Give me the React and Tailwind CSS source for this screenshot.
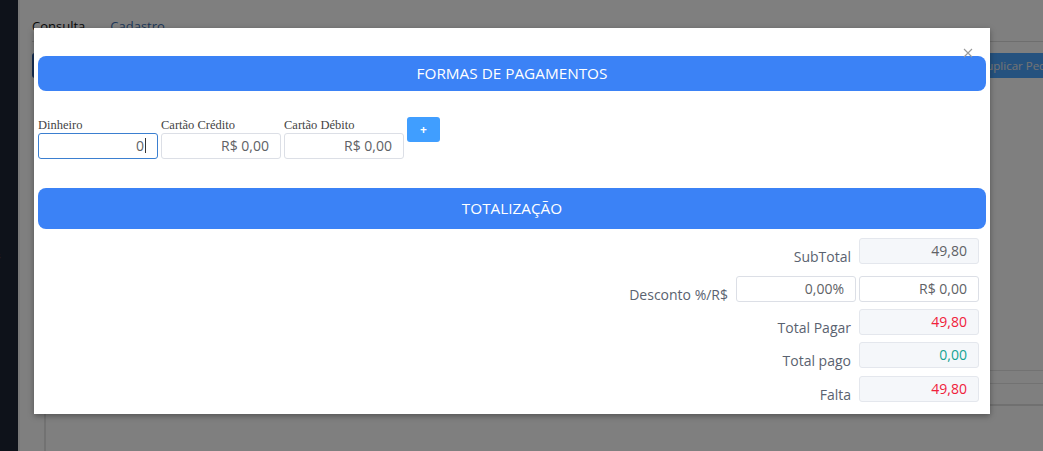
const sans = { fontFamily: '"Open Sans", "Noto Sans", sans-serif' };

function MoneyInput({ value, focused, className = "" }) {
  return (
    <div
      className={`h-[26px] w-[120px] rounded-[3px] border bg-white px-[11px] text-right text-[14px] leading-[24px] text-[#606266] ${
        focused ? "border-[#3b7fd0]" : "border-[#dcdfe6]"
      } ${className}`}
    >
      {value}
      {focused && <span className="ml-[1px] inline-block h-[15px] w-px translate-y-[2px] bg-[#333]" />}
    </div>
  );
}

function ReadInput({ value, color = "text-[#606266]" }) {
  return (
    <div
      className={`h-[26px] w-[120px] rounded-[3px] border border-[#e4e7ed] bg-[#f5f7fa] px-[11px] text-right text-[14px] leading-[24px] ${color}`}
    >
      {value}
    </div>
  );
}

function TotalRow({ label, children, className = "" }) {
  return (
    <div className={`flex items-end justify-end ${className}`}>
      <span className="mr-[8px] translate-y-[3px] text-[14px] leading-5 text-[#5a6270]">{label}</span>
      {children}
    </div>
  );
}

function Header({ children, className = "" }) {
  return (
    <div
      className={`flex items-center justify-center rounded-[8px] bg-[#3b82f6] text-[15.3px] text-white ${className}`}
    >
      {children}
    </div>
  );
}

export default function App() {
  return (
    <div className="relative flex h-[451px] w-[1043px] overflow-hidden bg-white" style={sans}>
      {/* page behind the dialog */}
      <div className="relative w-[18px] bg-[#1c2534]">
        <span className="absolute left-[-4px] top-[249px] text-[9px] text-[#cbd5e1]">s</span>
      </div>
      <div className="w-[2px] bg-[#f0f0f0]" />
      <div className="flex flex-1 flex-col bg-white pl-[12px]">
        <div className="flex h-[42px] items-start gap-[25px] border-b border-[#dddddd] pt-[17px] text-[13px]">
          <span className="text-[#111]">Consulta</span>
          <span className="text-[#3c6fb0]">Cadastro</span>
        </div>
        <div className="mt-[11px] flex h-[25px] justify-between">
          <div className="w-[60px] rounded-[3px] bg-[#2f5fa8]" />
          <div className="mr-[-34px] rounded-[3px] bg-[#4aa4ff] px-[14px] text-[11.5px] leading-[25px] text-[#e8e8e8]">
            Duplicar Pedido
          </div>
        </div>
        <div className="flex-1" />
        <div className="ml-[12px] h-[81px] border-l-2 border-t border-[#e4e4e4]">
          <div className="mt-[12px] border-t border-[#e4e4e4]" />
          <div className="mt-[20px] border-t-2 border-[#e0e0e0]" />
        </div>
      </div>

      {/* overlay + dialog */}
      <div className="absolute inset-0 bg-black/50">
        <div className="absolute left-[34px] top-[28px] h-[386px] w-[956px] bg-white px-[4px] pt-[28px] shadow-[0_2px_6px_rgba(0,0,0,0.35)]">
          <svg className="absolute right-[17px] top-[20px]" width="10" height="10" viewBox="0 0 10 10">
            <path d="M1 1L9 9M9 1L1 9" stroke="#9a9a9a" strokeWidth="1.1" />
          </svg>

          <Header className="h-[35px]">FORMAS DE PAGAMENTOS</Header>

          <div className="mt-[26px] flex items-start">
            {[
              ["Dinheiro", "0", true],
              ["Cartão Crédito", "R$ 0,00", false],
              ["Cartão Débito", "R$ 0,00", false],
            ].map(([label, value, focused]) => (
              <div key={label} className="mr-[3px] flex flex-col">
                <span
                  className="text-[12.5px] leading-[16px] text-[#444]"
                  style={{ fontFamily: '"Liberation Serif", serif' }}
                >
                  {label}
                </span>
                <MoneyInput value={value} focused={focused} />
              </div>
            ))}
            <button className="h-[25px] w-[33px] rounded-[3px] bg-[#409eff] text-[12px] font-bold leading-[25px] text-white">
              +
            </button>
          </div>

          <Header className="mt-[29px] h-[41px]">TOTALIZAÇÃO</Header>

          <div className="mr-[7px] mt-[9px] flex flex-col">
            <TotalRow label="SubTotal">
              <ReadInput value="49,80" />
            </TotalRow>
            <TotalRow label="Desconto %/R$" className="mt-[12px]">
              <MoneyInput value="0,00%" className="mr-[3px]" />
              <MoneyInput value="R$ 0,00" />
            </TotalRow>
            <TotalRow label="Total Pagar" className="mt-[7px]">
              <ReadInput value="49,80" color="text-[#f0213a]" />
            </TotalRow>
            <TotalRow label="Total pago" className="mt-[7px]">
              <ReadInput value="0,00" color="text-[#15a392]" />
            </TotalRow>
            <TotalRow label="Falta" className="mt-[8px]">
              <ReadInput value="49,80" color="text-[#f0213a]" />
            </TotalRow>
          </div>
        </div>
      </div>
    </div>
  );
}
